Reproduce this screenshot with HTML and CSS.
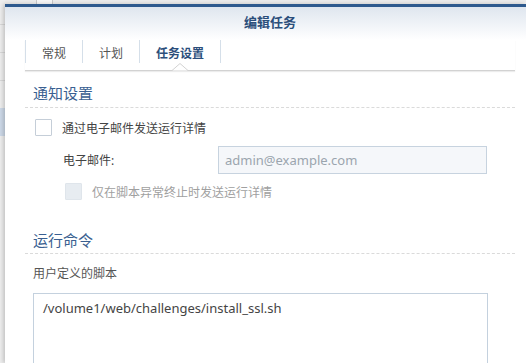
FILE: index.html
```html
<!DOCTYPE html>
<html lang="zh-CN">
<head>
    <meta charset="UTF-8">
    <meta name="viewport" content="width=device-width, initial-scale=1.0">
    <title>编辑任务</title>
    <link rel="stylesheet" href="styles.css">
</head>
<body>
<div class="desktop">
    <div class="peek"></div>
    <div class="backdrop">
        <div class="bg-row"></div>
        <div class="bg-row"></div>
        <div class="bg-row"></div>
        <div class="bg-row bg-sel"></div>
    </div>

    <div class="dialog">
        <div class="dialog-head">编辑任务</div>

        <div class="dialog-body">
            <div class="tabs">
                <div class="tab">常规</div>
                <div class="tab">计划</div>
                <div class="tab active">任务设置</div>
                <svg class="notch" width="16" height="8" viewBox="0 0 16 8">
                    <path d="M0 7.5 L8 0.5 L16 7.5" fill="#fff" stroke="#d2d2d2" stroke-width="1"/>
                </svg>
            </div>

            <div class="section-title">通知设置</div>

            <div class="check-row">
                <span class="checkbox"></span>
                <span class="check-label">通过电子邮件发送运行详情</span>
            </div>

            <div class="field-row">
                <label class="field-label" for="mail">电子邮件:</label>
                <input class="field-input" type="text" id="mail" placeholder="admin@example.com" disabled>
            </div>

            <div class="check-row sub">
                <span class="checkbox disabled"></span>
                <span class="check-label muted">仅在脚本异常终止时发送运行详情</span>
            </div>

            <div class="section-title second">运行命令</div>

            <div class="plain-label">用户定义的脚本</div>
            <textarea class="script-box">/volume1/web/challenges/install_ssl.sh</textarea>
        </div>
    </div>
</div>
</body>
</html>
```

FILE: styles.css
```css
html, body {
  margin: 0;
  padding: 0;
  height: 100%;
  overflow: hidden;
}

body {
  font-family: "Noto Sans", "Noto Sans CJK SC", sans-serif;
  background-color: #ececec;
}

.desktop {
  position: relative;
  height: 100%;
  padding: 4px 0 0 5px;
  box-sizing: border-box;
  overflow: hidden;
}

/* page behind the dialog */
.peek {
  position: absolute;
  left: 36px;
  top: -2px;
  width: 15px;
  height: 6px;
  border: 1px solid #c9c9c9;
  background: #f7f7f7;
}

.backdrop {
  position: absolute;
  left: 0;
  top: 0;
  width: 5px;
  height: 100%;
  background: #eeeeee;
}

.bg-row {
  height: 24px;
  border-bottom: 1px solid #d9d9d9;
}

.bg-row:nth-child(2) {
  height: 27px;
}

.bg-row:nth-child(3) {
  height: 27px;
}

.bg-sel {
  margin-top: 27px;
  height: 28px;
  border: none;
  background: #cdd9e8;
}

.dialog {
  position: relative;
  width: 521px;
  height: 100%;
  box-sizing: border-box;
  overflow: hidden;
  background: #fff;
  border-top: 3px solid #2e5a8e;
  box-shadow: -2px 0 4px rgba(0, 0, 0, 0.18);
}

.dialog-head {
  height: 33px;
  line-height: 31px;
  padding-left: 9px;
  text-align: center;
  font-size: 13px;
  font-weight: bold;
  color: #2b4e7b;
  background: linear-gradient(#dfe6ef, #ffffff);
}

.dialog-body {
  padding: 0 11px 0 20px;
  display: flex;
  flex-direction: column;
}

.tabs {
  position: relative;
  display: flex;
  height: 30px;
  border-bottom: 1px solid #d2d2d2;
  box-shadow: 0 1px 1px #ececec;
}

.tab {
  height: 23px;
  line-height: 28px;
  padding: 0 16px;
  font-size: 12px;
  color: #555;
  border-right: 1px solid #d5dfe9;
}

.tab:first-child {
  border-left: 1px solid #d5dfe9;
}

.tab.active {
  color: #2b4e7b;
  font-weight: bold;
}

.notch {
  position: absolute;
  left: 147px;
  bottom: -1px;
  display: block;
}

.section-title {
  margin-top: 12px;
  padding: 0 0 4px 8px;
  line-height: 20px;
  font-size: 15px;
  color: #3a5f91;
  border-bottom: 1px dashed #dadada;
}

.section-title.second {
  margin-top: 30px;
  padding-bottom: 3px;
}

.check-row {
  display: flex;
  align-items: center;
  gap: 10px;
  height: 17px;
  margin-top: 11px;
  padding-left: 10px;
}

.check-row.sub {
  margin-top: 9px;
  padding-left: 40px;
}

.checkbox {
  width: 15px;
  height: 15px;
  border: 1px solid #c5ced8;
  border-radius: 1px;
  background: #fff;
}

.checkbox.disabled {
  background: #e7ecf1;
  border-color: #dfe5eb;
}

.check-label {
  font-size: 12px;
  color: #444;
}

.check-label.muted {
  color: #a0a0a0;
}

.field-row {
  display: flex;
  align-items: center;
  margin-top: 10px;
  padding-left: 38px;
}

.field-label {
  width: 155px;
  font-size: 12px;
  color: #444;
}

.field-input {
  width: 269px;
  height: 28px;
  box-sizing: border-box;
  padding: 0 6px;
  border: 1px solid #c7d3df;
  background: #f5f7fa;
  font-family: "Noto Sans", "Noto Sans CJK SC", sans-serif;
  font-size: 13px;
}

.field-input::placeholder {
  color: #9ba5ae;
}

.plain-label {
  margin-top: 10px;
  padding-left: 8px;
  line-height: 20px;
  font-size: 12px;
  color: #555;
}

.script-box {
  margin: 9px 0 0 8px;
  width: 455px;
  height: 80px;
  box-sizing: border-box;
  padding: 4px 9px;
  border: 1px solid #c4d1de;
  resize: none;
  font-family: "Noto Sans", "Noto Sans CJK SC", sans-serif;
  font-size: 13px;
  color: #444;
  line-height: 20px;
}
```
